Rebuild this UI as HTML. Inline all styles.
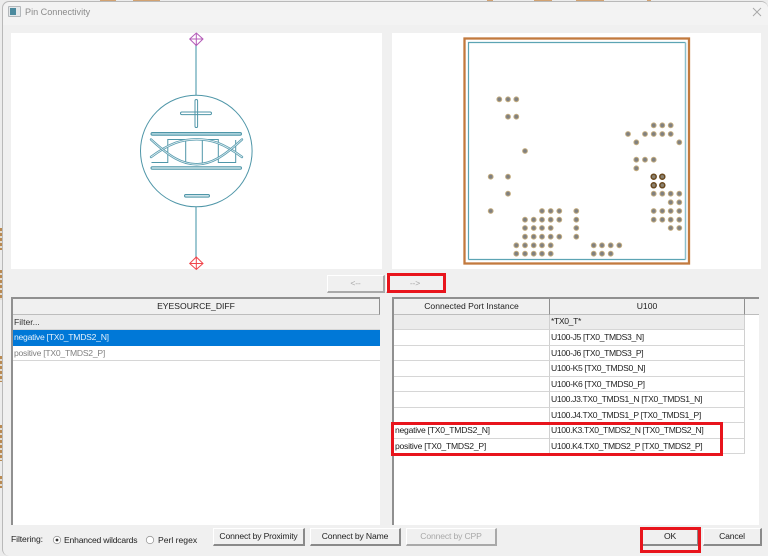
<!DOCTYPE html>
<html><head><meta charset="utf-8"><title>Pin Connectivity</title>
<style>
html,body{margin:0;padding:0;width:768px;height:556px;overflow:hidden;background:#ececec}
*{box-sizing:border-box}
div,span{position:absolute}
body{font-family:"Liberation Sans",sans-serif;font-size:8.6px;color:#222;filter:blur(.3px)}
#win{left:2px;top:1px;width:766px;height:555px;background:#f0f0f0;border-radius:7px 7px 0 7px;border:1px solid #b9b9b9;border-right:0;border-bottom:0}
#tb{left:0;top:0;width:100%;height:23px;background:#f3f3f3;border-radius:7px 7px 0 0}
.p{background:#fff}
.t{white-space:nowrap;line-height:15px;height:15px}
.tbl{background:#fff;border-top:2px solid #909090;border-left:2px solid #909090}
.h{background:#f0f0f0;border-bottom:1px solid #bdbdbd;border-right:1px solid #8f8f8f;text-align:center;white-space:nowrap}
.c{background:#fff;border-bottom:1px solid #d6d6d6;white-space:nowrap;padding-left:2px;line-height:15px;letter-spacing:-.25px}
.u{left:550px;width:195px;height:15.500px;border-right:1px solid #d0d0d0;padding-left:1px;letter-spacing:-.36px}
.n{left:394px;width:156px;height:15.500px;border-right:1px solid #d0d0d0;padding-left:1px}
.b{background:#f0f0f0;border-right:2px solid #8a8a8a;border-bottom:2px solid #8a8a8a;border-top:1px solid #fff;border-left:1px solid #fff;text-align:center;white-space:nowrap;color:#222;letter-spacing:-.15px}
.dis{color:#a8a8a8;border-color:#fff #a9a9a9 #a9a9a9 #fff}
.r{border:3px solid #e8141c;background:transparent}
.o{top:0;height:1px;background:#d2a271}
.l{left:0;width:2px;background:repeating-linear-gradient(#b98a52 0 3px,#e4ddd2 3px 5px)}
</style></head><body>
<div class="o" style="left:100px;width:16px"></div>
<div class="o" style="left:133px;width:27px"></div>
<div class="o" style="left:487px;width:6px"></div>
<div class="o" style="left:534px;width:18px"></div>
<div class="o" style="left:576px;width:28px"></div>
<div class="o" style="left:647px;width:4px"></div>
<div class="l" style="top:228px;height:22px"></div>
<div class="l" style="top:270px;height:30px"></div>
<div class="l" style="top:356px;height:26px"></div>
<div class="l" style="top:425px;height:36px"></div>
<div class="l" style="top:476px;height:12px"></div>
<div id="win">
<div id="tb"></div>
</div>
<!-- title -->
<div style="left:8px;top:6px;width:13px;height:11px;background:#e4e8ea;border:1px solid #b4b8bb;border-radius:1px"></div>
<div style="left:10px;top:8px;width:6px;height:7px;background:#4b8a9e"></div>
<div class="t" style="left:25px;top:5px;color:#8b8b8b;font-size:9.1px">Pin Connectivity</div>
<svg style="position:absolute;left:752px;top:6px" width="11" height="11"><path d="M1 2L9 10M9 2L1 10" stroke="#a8a8a8" stroke-width="1" fill="none"/></svg>

<!-- preview panels -->
<div class="p" style="left:11px;top:33px;width:371px;height:236px"></div>
<div class="p" style="left:392px;top:33px;width:369px;height:236px"></div>

<svg style="position:absolute;left:0;top:0" width="768" height="280" fill="none">
<g stroke="#7fb5c3" stroke-width="1.500"><path d="M196 44V95M196 207V258"/></g>
<g stroke="#b45cb8" stroke-width="1"><path d="M196.300 33L203 39L196.300 45.500L189.700 39ZM196.300 33V45.500M189.700 39H203"/></g>
<g stroke="#f0454b" stroke-width="1"><path d="M196.300 257L203 263.500L196.300 269.500L189.700 263.500ZM196.300 257V269.500M189.700 263.500H203"/></g>
<g stroke="#4f96a8" stroke-width="1">
<circle cx="196.300" cy="151" r="55.800"/>
<rect x="180.500" y="112" width="31" height="2.600" rx="1.300"/>
<rect x="195" y="99.500" width="2.600" height="28" rx="1.300"/>
<rect x="151" y="132.500" width="90.500" height="2.800" rx="1.400" fill="#a9d0da"/>
<rect x="151" y="166.700" width="90.500" height="2.600" rx="1.300" fill="#cde3e9"/>
<rect x="184.500" y="194.500" width="25" height="2.600" rx="1.300" fill="#cde3e9"/>
<path d="M151.500 162.500H167.800V139.500H218.300V162.500H235.700V140"/>
<path d="M185.700 140V163.500H202.300V140"/>
</g>
<g stroke-linecap="round">
<path d="M151 157C170 143 182 139.300 196.700 139.300C211 139.300 223 143 242 157" stroke="#5a9db0" stroke-width="2.400"/>
<path d="M151 157C170 143 182 139.300 196.700 139.300C211 139.300 223 143 242 157" stroke="#e4f0f3" stroke-width=".8"/>
<path d="M151 139.500C170 157 182 164.300 196.700 164.300C211 164.300 223 157 242 139.500" stroke="#5a9db0" stroke-width="2.400"/>
<path d="M151 139.500C170 157 182 164.300 196.700 164.300C211 164.300 223 157 242 139.500" stroke="#e4f0f3" stroke-width=".8"/>
</g>
<rect x="464.500" y="38.500" width="224.500" height="225" stroke="#c27a3e" stroke-width="2.300"/>
<g stroke="#5ca4b4" stroke-width="1.200"><path d="M468.500 259.500V42.500H685.500"/><path d="M468.500 259.500H685.500"/></g>
<path d="M685.500 42.500V259.500" stroke="#8bbfcc" stroke-width="1.500"/>
<defs>
<g id="d"><circle r="2.400" fill="#808080" stroke="#c4ad80" stroke-width="1"/></g>
<g id="e"><circle r="2.500" fill="#8a8272" stroke="#6b4a20" stroke-width="1.500"/></g>
</defs>
<use href="#d" x="499.300" y="99.300"/><use href="#d" x="508" y="99.300"/><use href="#d" x="516.300" y="99.300"/>
<use href="#d" x="508" y="116.700"/><use href="#d" x="516.300" y="116.700"/>
<use href="#d" x="653.700" y="125.300"/><use href="#d" x="662.300" y="125.300"/><use href="#d" x="670.700" y="125.300"/>
<use href="#d" x="628" y="134"/><use href="#d" x="645" y="134"/><use href="#d" x="653.700" y="134"/><use href="#d" x="662.300" y="134"/><use href="#d" x="670.700" y="134"/>
<use href="#d" x="636.300" y="142.300"/><use href="#d" x="679.300" y="142.300"/>
<use href="#d" x="525" y="151"/>
<use href="#d" x="636.300" y="159.700"/><use href="#d" x="645" y="159.700"/><use href="#d" x="653.700" y="159.700"/>
<use href="#d" x="636.300" y="168.300"/>
<use href="#d" x="490.700" y="176.700"/><use href="#d" x="508" y="176.700"/><use href="#e" x="653.700" y="176.700"/><use href="#e" x="662.300" y="176.700"/>
<use href="#e" x="653.700" y="185.300"/><use href="#e" x="662.300" y="185.300"/>
<use href="#d" x="508" y="193.700"/><use href="#d" x="653.700" y="193.700"/><use href="#d" x="662.300" y="193.700"/><use href="#d" x="670.700" y="193.700"/><use href="#d" x="679.300" y="193.700"/>
<use href="#d" x="670.700" y="202.300"/><use href="#d" x="679.300" y="202.300"/>
<use href="#d" x="490.700" y="211"/><use href="#d" x="542" y="211"/><use href="#d" x="550.700" y="211"/><use href="#d" x="559.300" y="211"/><use href="#d" x="576.300" y="211"/><use href="#d" x="653.700" y="211"/><use href="#d" x="662.300" y="211"/><use href="#d" x="670.700" y="211"/><use href="#d" x="679.300" y="211"/>
<use href="#d" x="525" y="219.700"/><use href="#d" x="533.700" y="219.700"/><use href="#d" x="542" y="219.700"/><use href="#d" x="550.700" y="219.700"/><use href="#d" x="559.300" y="219.700"/><use href="#d" x="576.300" y="219.700"/><use href="#d" x="653.700" y="219.700"/><use href="#d" x="662.300" y="219.700"/><use href="#d" x="670.700" y="219.700"/><use href="#d" x="679.300" y="219.700"/>
<use href="#d" x="525" y="228"/><use href="#d" x="533.700" y="228"/><use href="#d" x="542" y="228"/><use href="#d" x="550.700" y="228"/><use href="#d" x="576.300" y="228"/><use href="#d" x="670.700" y="228"/><use href="#d" x="679.300" y="228"/>
<use href="#d" x="525" y="236.700"/><use href="#d" x="533.700" y="236.700"/><use href="#d" x="542" y="236.700"/><use href="#d" x="550.700" y="236.700"/><use href="#d" x="559.300" y="236.700"/><use href="#d" x="576.300" y="236.700"/>
<use href="#d" x="516.300" y="245.300"/><use href="#d" x="525" y="245.300"/><use href="#d" x="533.700" y="245.300"/><use href="#d" x="542" y="245.300"/><use href="#d" x="550.700" y="245.300"/><use href="#d" x="593.700" y="245.300"/><use href="#d" x="602" y="245.300"/><use href="#d" x="610.700" y="245.300"/><use href="#d" x="619.300" y="245.300"/>
<use href="#d" x="516.300" y="253.700"/><use href="#d" x="525" y="253.700"/><use href="#d" x="533.700" y="253.700"/><use href="#d" x="542" y="253.700"/><use href="#d" x="550.700" y="253.700"/><use href="#d" x="593.700" y="253.700"/><use href="#d" x="602" y="253.700"/><use href="#d" x="610.700" y="253.700"/>
</svg>

<!-- arrows -->
<div class="b dis" style="left:327px;top:275px;width:58px;height:18px;line-height:15px">&lt;--</div>
<div class="b dis" style="left:386px;top:275px;width:59px;height:18px;line-height:15px">--&gt;</div>
<div class="r" style="left:387px;top:273px;width:59px;height:20px"></div>

<!-- left table -->
<div class="tbl" style="left:11px;top:297px;width:369px;height:228px"></div>
<div class="h" style="left:13px;top:299px;width:367px;height:16px;line-height:15px">EYESOURCE_DIFF</div>
<div class="c" style="left:13px;top:315px;width:367px;height:15px;background:#ececec;color:#333;padding-left:1px;line-height:14px;letter-spacing:0">Filter...</div>
<div class="c" style="left:13px;top:330px;width:367px;height:15.500px;background:#0078d7;color:#e6f1fb;border:0;padding-left:1px">negative [TX0_TMDS2_N]</div>
<div class="c" style="left:13px;top:345.500px;width:367px;height:15.500px;color:#808080;padding-left:1px">positive [TX0_TMDS2_P]</div>

<!-- right table -->
<div class="tbl" style="left:392px;top:297px;width:367px;height:228px"></div>
<div class="h" style="left:394px;top:299px;width:156px;height:16px;line-height:15px">Connected Port Instance</div>
<div class="h" style="left:550px;top:299px;width:195px;height:16px;line-height:15px">U100</div>
<div class="h" style="left:745px;top:299px;width:14px;height:16px;border-right:0"></div>
<div class="c n" style="top:315px;height:15px;background:#ececec"></div>
<div class="c u" style="top:315px;height:15px;background:#ececec;line-height:13px">*TX0_T*</div>

<div class="c n" style="top:330px"></div>
<div class="c u" style="top:330px">U100-J5 [TX0_TMDS3_N]</div>
<div class="c n" style="top:345.500px"></div>
<div class="c u" style="top:345.500px">U100-J6 [TX0_TMDS3_P]</div>
<div class="c n" style="top:361px"></div>
<div class="c u" style="top:361px">U100-K5 [TX0_TMDS0_N]</div>
<div class="c n" style="top:376.500px"></div>
<div class="c u" style="top:376.500px">U100-K6 [TX0_TMDS0_P]</div>
<div class="c n" style="top:392px"></div>
<div class="c u" style="top:392px">U100.J3.TX0_TMDS1_N [TX0_TMDS1_N]</div>
<div class="c n" style="top:407.500px"></div>
<div class="c u" style="top:407.500px">U100.J4.TX0_TMDS1_P [TX0_TMDS1_P]</div>
<div class="c n" style="top:423px">negative [TX0_TMDS2_N]</div>
<div class="c u" style="top:423px">U100.K3.TX0_TMDS2_N [TX0_TMDS2_N]</div>
<div class="c n" style="top:438.500px">positive [TX0_TMDS2_P]</div>
<div class="c u" style="top:438.500px">U100.K4.TX0_TMDS2_P [TX0_TMDS2_P]</div>
<div class="r" style="left:391px;top:422px;width:332px;height:34px"></div>

<!-- bottom -->
<div class="t" style="left:11px;top:532px;letter-spacing:-.1px">Filtering:</div>
<svg style="position:absolute;left:51px;top:534px" width="12" height="12"><circle cx="6" cy="6" r="3.700" fill="#fff" stroke="#9a9a9a" stroke-width=".8"/><circle cx="6" cy="6" r="1.400" fill="#333"/></svg>
<div class="t" style="left:64px;top:533px;letter-spacing:-.2px">Enhanced wildcards</div>
<svg style="position:absolute;left:144px;top:534px" width="12" height="12"><circle cx="6" cy="6" r="3.700" fill="#fff" stroke="#9a9a9a" stroke-width=".8"/></svg>
<div class="t" style="left:158px;top:533px">Perl regex</div>
<div class="b" style="left:213px;top:528px;width:92px;height:18px;line-height:15px">Connect by Proximity</div>
<div class="b" style="left:310px;top:528px;width:91px;height:18px;line-height:15px">Connect by Name</div>
<div class="b dis" style="left:406px;top:528px;width:91px;height:18px;line-height:15px">Connect by CPP</div>
<div class="b" style="left:642px;top:528px;width:57px;height:18px;line-height:15px">OK</div>
<div class="b" style="left:703px;top:528px;width:59px;height:18px;line-height:15px">Cancel</div>
<div class="r" style="left:640px;top:527px;width:61px;height:26px"></div>
</body></html>
